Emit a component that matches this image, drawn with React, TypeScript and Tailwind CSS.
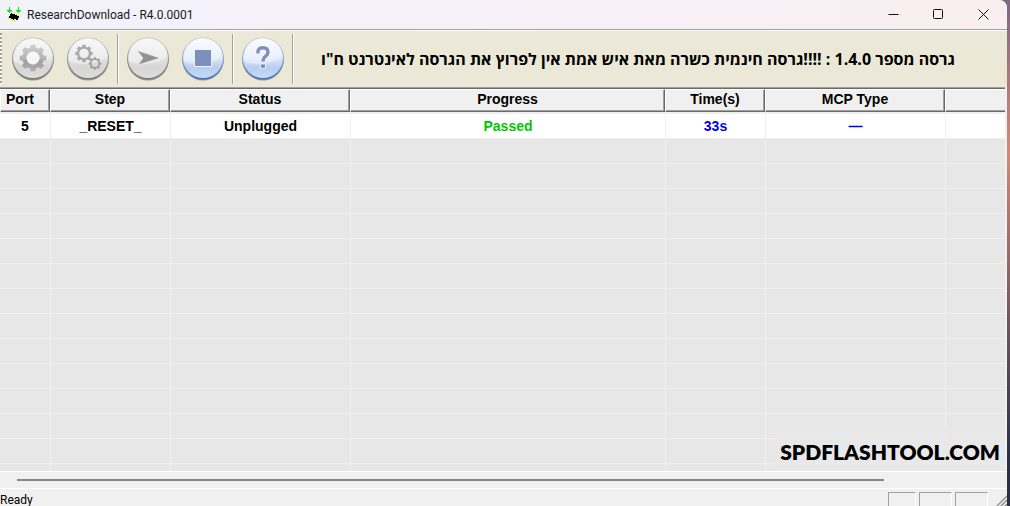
import React from 'react';

const teeth8 = [0, 45, 90, 135, 180, 225, 270, 315];

function Gear({ cx, cy, r, hole, fill }: { cx: number; cy: number; r: number; hole: number; fill: string }) {
  const body = r * 0.8;
  const points = teeth8.flatMap((a) => {
    return [
      [a - 25, body],
      [a - 14, body],
      [a - 10, r],
      [a + 10, r],
      [a + 14, body],
    ].map(([deg, d]) => {
      const t = (deg * Math.PI) / 180;
      return `${(cx + Math.sin(t) * d).toFixed(2)} ${(cy - Math.cos(t) * d).toFixed(2)}`;
    });
  });
  const ring = `M${cx - hole} ${cy}a${hole} ${hole} 0 1 0 ${hole * 2} 0a${hole} ${hole} 0 1 0 ${-hole * 2} 0Z`;
  return <path d={`M${points.join('L')}Z${ring}`} fillRule="evenodd" fill={fill} />;
}

function RoundButton({ label, blue, id, children }: { label: string; blue?: boolean; id: string; children: React.ReactNode }) {
  return (
    <button type="button" aria-label={label} className="h-[46px] w-11 shrink-0">
      <svg viewBox="0 0 44 46" className="h-[46px] w-11" aria-hidden="true">
        <defs>
          <linearGradient id={`${id}-face`} x1="0" y1="0" x2="0" y2="1">
            <stop offset="0" stopColor={blue ? '#f8fafe' : '#f4f4f4'} />
            <stop offset="0.5" stopColor={blue ? '#dde6f7' : '#e2e2e2'} />
            <stop offset="0.75" stopColor={blue ? '#b9cdf0' : '#d6d6d6'} />
            <stop offset="1" stopColor={blue ? '#c4dcfb' : '#dedede'} />
          </linearGradient>
          <linearGradient id={`${id}-rim`} x1="0" y1="0" x2="0" y2="1">
            <stop offset="0" stopColor={blue ? '#b4bac6' : '#b4b4b4'} />
            <stop offset="0.5" stopColor={blue ? '#8fa3cc' : '#999999'} />
            <stop offset="1" stopColor={blue ? '#3f6fc4' : '#7a7a7a'} />
          </linearGradient>
          <linearGradient id={`${id}-glyph`} gradientUnits="userSpaceOnUse" x1="0" y1="9" x2="0" y2="36">
            <stop offset="0" stopColor="#cfcfcf" />
            <stop offset="0.5" stopColor="#b4b4b4" />
            <stop offset="0.6" stopColor="#9f9f9f" />
            <stop offset="1" stopColor="#b0b0b0" />
          </linearGradient>
        </defs>
        <circle cx="22" cy="24" r="20.6" fill="#7c7a72" opacity="0.75" />
        <circle cx="22" cy="22.5" r="21" fill={`url(#${id}-rim)`} />
        <circle cx="22" cy="22" r="20" fill={`url(#${id}-face)`} />
        <path d="M2.5 25C12 30 32 29 41.5 20C40.5 10 32 3 22 3S2.5 11 2.5 25Z" fill="#fff" opacity="0.4" />
        {children}
      </svg>
    </button>
  );
}

function Separator() {
  return <div className="mx-[7px] h-[50px] w-[2px] shrink-0 border-l border-r border-l-[#a0a0a0] border-r-white" />;
}

const columns = ['Port', 'Step', 'Status', 'Progress', 'Time(s)', 'MCP Type', ''];
const cells = [
  { text: '5', style: 'text-black' },
  { text: '_RESET_', style: 'text-black' },
  { text: 'Unplugged', style: 'text-black' },
  { text: 'Passed', style: 'text-[#00c800]' },
  { text: '33s', style: 'text-[#0000f0]' },
  { text: '—', style: 'text-[#0000f0]' },
  { text: '', style: 'text-black' },
];
const emptyRows = Array.from({ length: 14 }, (_, i) => i);

function PortTable() {
  return (
    <table className="w-full table-fixed border-separate border-spacing-0 text-sm leading-5 font-bold text-black">
      <colgroup>
        <col className="w-[50px]" />
        <col className="w-[120px]" />
        <col className="w-[180px]" />
        <col className="w-[315px]" />
        <col className="w-[100px]" />
        <col className="w-[180px]" />
        <col />
      </colgroup>
      <thead>
        <tr>
          {columns.map((c, i) => (
            <th
              key={i}
              scope="col"
              className={`h-[23px] border-t border-b border-l border-t-white border-b-[#696969] border-l-white bg-[#f0f0f0] pt-0 pr-0 pb-[3px] leading-[18px] ${
                i < 6 ? 'border-r border-r-[#696969] shadow-[inset_-1px_-1px_0_#a0a0a0]' : 'shadow-[inset_0_-1px_0_#a0a0a0]'
              } ${i === 0 ? 'pl-[5px] text-left' : 'pl-0 text-center'}`}
            >
              {c}
            </th>
          ))}
        </tr>
      </thead>
      <tbody>
        <tr className="bg-white">
          {cells.map((c, i) => (
            <td
              key={i}
              className={`h-[27px] border-t-2 border-b border-[#f0f0f0] p-0 text-center ${i > 0 ? 'border-l' : ''} ${c.style}`}
            >
              {c.text}
            </td>
          ))}
        </tr>
        {emptyRows.map((r) => (
          <tr key={r}>
            {columns.map((_, i) => (
              <td key={i} className={`h-[25px] border-b border-[#f0f0f0] p-0 ${i > 0 ? 'border-l' : ''}`} />
            ))}
          </tr>
        ))}
      </tbody>
    </table>
  );
}

function TitleBar() {
  return (
    <header className="flex h-[29px] shrink-0 items-center bg-linear-to-r from-[#f1f2fa] via-[#f7f0f8] to-[#f9eff0] pl-[7px]">
      <svg viewBox="0 0 15 16" className="h-4 w-[15px] shrink-0" shapeRendering="crispEdges" aria-hidden="true">
        <path d="M2 0H3V3H5V4H4V5H3V6H2V5H1V4H0V3H2Z M11 0H12V3H14V4H13V5H12V6H11V5H10V4H9V3H11Z" fill="#00f000" />
        <path d="M3 7H4V6H6V7H8V8H10V9H12V11H11V13H9V12H7V13H6V12H4V11H2V9H3Z" fill="#000" />
        <path d="M1 10H2V12H1Z M3 11H4V13H3Z M5 12H6V14H5Z M7 13H8V15H7Z M5 6H6V7H5Z M7 6H8V7H7Z M9 7H10V8H9Z M11 8H12V9H11Z" fill="#f5e600" />
      </svg>
      <h1 className="ml-[5px] font-['Roboto','Open_Sans',sans-serif] text-xs text-[#1a1a1a]">ResearchDownload - R4.0.0001</h1>
      <div className="ml-auto flex pr-px">
        <button type="button" aria-label="Minimize" className="flex h-7 w-[45px] items-center justify-center">
          <svg viewBox="0 0 11 11" className="size-[11px]" aria-hidden="true"><path d="M0.5 5.5H10.5" stroke="#111" /></svg>
        </button>
        <button type="button" aria-label="Maximize" className="flex h-7 w-[45px] items-center justify-center">
          <svg viewBox="0 0 11 11" className="size-[11px]" aria-hidden="true"><rect x="0.5" y="0.5" width="9" height="9" rx="1" fill="none" stroke="#111" /></svg>
        </button>
        <button type="button" aria-label="Close" className="flex h-7 w-[45px] items-center justify-center">
          <svg viewBox="0 0 11 11" className="size-[11px]" aria-hidden="true"><path d="M0.5 0.5L10.5 10.5M10.5 0.5L0.5 10.5" stroke="#111" /></svg>
        </button>
      </div>
    </header>
  );
}

function Toolbar() {
  return (
    <div className="flex h-[57px] shrink-0 items-center border-t border-white bg-[#ebe8d7]">
      <div className="h-[52px] w-[2px] shrink-0 bg-[repeating-linear-gradient(to_bottom,#a3a196_0_2px,#f7f6ee_2px_4px)]" />
      <div className="ml-[9px] flex items-center">
        <div className="flex gap-[11px]">
          <RoundButton label="Load packet" id="load">
            <Gear cx={22} cy={22} r={13.5} hole={6.5} fill="url(#load-glyph)" />
            <circle cx="22" cy="22" r="6.5" fill="#fbfbfb" opacity="0.7" />
          </RoundButton>
          <RoundButton label="Settings" id="settings">
            <Gear cx={18} cy={17.5} r={8.8} hole={4.8} fill="#a9a9a9" />
            <Gear cx={29} cy={27.5} r={6.4} hole={3.4} fill="#a0a0a0" />
          </RoundButton>
        </div>
        <Separator />
        <div className="flex gap-[11px]">
          <RoundButton label="Start" id="start">
            <path d="M11 14.5L34 22L12 29L17 22Z" fill="#929292" stroke="#f2f2f2" strokeWidth="0.6" />
          </RoundButton>
          <RoundButton label="Stop" blue id="stop">
            <rect x="13.5" y="13.5" width="17" height="17" fill="#7d8fbb" stroke="#eef3fd" />
          </RoundButton>
        </div>
        <Separator />
        <RoundButton label="Help" blue id="help">
          <path d="M17 17.5V15Q17.5 11.7 22 11.7Q27 11.7 27 16Q27 18.5 24.3 20.5Q22 22.2 22 25.5" fill="none" stroke="#fff" strokeWidth="5" />
          <path d="M17 17.5V15Q17.5 11.7 22 11.7Q27 11.7 27 16Q27 18.5 24.3 20.5Q22 22.2 22 25.5" fill="none" stroke="#7d8fbb" strokeWidth="3.4" />
          <rect x="19.7" y="28" width="4.6" height="4.2" fill="#7386b6" stroke="#fff" strokeWidth="0.8" />
        </RoundButton>
        <Separator />
      </div>
      <p dir="rtl" lang="he" className="min-w-0 flex-1 pr-[52px] text-right font-['Open_Sans','DejaVu_Sans',sans-serif] text-base leading-6 font-bold whitespace-nowrap text-black">
        גרסה מספר 1.4.0 : !!!!גרסה חינמית כשרה מאת איש אמת אין לפרוץ את הגרסה לאינטרנט ח"ו
      </p>
    </div>
  );
}

export default function App() {
  return (
    <div className="flex h-screen overflow-hidden bg-linear-to-b from-[#7d6880] via-[#d08a78] via-30% to-[#2b3047] to-90% font-['Open_Sans',sans-serif]">
      <div className="mr-[3px] flex min-w-0 flex-1 flex-col overflow-hidden rounded-tr-lg bg-[#f0f0f0]">
        <TitleBar />
        <div className="h-px shrink-0 bg-[#a0a0a0]" />
        <Toolbar />
        <div className="mr-[2px] h-px shrink-0 bg-[#a0a0a0]" />
        <main className="relative mr-[2px] min-h-0 flex-1 overflow-hidden border-t border-[#696969] bg-[#e7e7e7] font-['Liberation_Sans',Arial,sans-serif]">
          <PortTable />
          <p className="absolute right-0 bottom-0 bg-[#e9e9e9]/80 px-[5px] pt-3 pb-[5px] font-['Lato',sans-serif] text-[21px] leading-7 font-extrabold text-black">
            SPDFLASHTOOL.COM
          </p>
        </main>
        <div className="flex h-[18px] shrink-0 items-center border-t border-b border-t-white border-b-white pr-[123px] pl-[17px]">
          <div className="h-[2px] w-full bg-[#868686]" />
        </div>
        <footer className="flex h-[17px] shrink-0 overflow-hidden text-xs leading-[22px]">
          <span className="font-['Roboto','Open_Sans',sans-serif]">Ready</span>
          <div className="ml-auto flex items-start gap-[3px] pt-[3px]">
            <div className="h-5 w-7 border-t border-r border-l border-t-[#a0a0a0] border-r-white border-l-[#a0a0a0]" />
            <div className="h-5 w-[33px] border-t border-r border-l border-t-[#a0a0a0] border-r-white border-l-[#a0a0a0]" />
            <div className="h-5 w-[33px] border-t border-r border-l border-t-[#a0a0a0] border-r-white border-l-[#a0a0a0]" />
          </div>
          <svg viewBox="0 0 12 12" className="mt-[6px] ml-[7px] size-3 shrink-0" aria-hidden="true">
            <path d="M1 12L12 1M5 12L12 5M9 12L12 9" stroke="#8c8c8c" strokeWidth="1.3" />
          </svg>
        </footer>
      </div>
    </div>
  );
}
